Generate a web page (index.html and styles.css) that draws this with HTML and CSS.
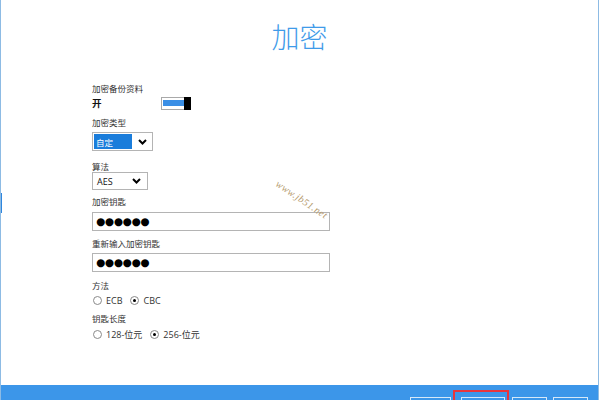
FILE: index.html
```html
<!DOCTYPE html>
<html lang="zh">
<head>
<meta charset="utf-8">
<title>加密</title>
<link rel="stylesheet" href="styles.css">
</head>
<body>
<div class="window">
  <div class="edge-mark"></div>
  <main class="main">
    <h1 class="title">加密</h1>
    <div class="form">
      <div class="label">加密备份资料</div>
      <div class="toggle-row">
        <span class="toggle-text">开</span>
        <span class="toggle"><span class="toggle-fill"></span><span class="toggle-thumb"></span></span>
      </div>
      <div class="label gap-6">加密类型</div>
      <div class="select select-type gap-4">
        <span class="select-value selected">自定</span>
        <svg class="chev" width="9" height="6" viewBox="0 0 9 6"><polyline points="1,1 4.5,4.5 8,1" fill="none" stroke="#000" stroke-width="2"/></svg>
      </div>
      <div class="label gap-9">算法</div>
      <div class="select select-alg">
        <span class="select-value">AES</span>
        <svg class="chev" width="9" height="6" viewBox="0 0 9 6"><polyline points="1,1 4.5,4.5 8,1" fill="none" stroke="#000" stroke-width="2"/></svg>
      </div>
      <div class="label gap-5">加密钥匙</div>
      <div class="input gap-5"><span class="dots">●●●●●●</span></div>
      <div class="label gap-6">重新输入加密钥匙</div>
      <div class="input gap-4"><span class="dots">●●●●●●</span></div>
      <div class="label gap-7">方法</div>
      <div class="radios gap-3">
        <span class="radio"><span class="circle"></span>ECB</span>
        <span class="radio"><span class="circle checked"></span>CBC</span>
      </div>
      <div class="label gap-6">钥匙长度</div>
      <div class="radios gap-4">
        <span class="radio"><span class="circle"></span>128-位元</span>
        <span class="radio"><span class="circle checked"></span>256-位元</span>
      </div>
    </div>
    <div class="watermark">www.jb51.net</div>
  </main>
  <footer class="footer">
    <span class="btn b1"></span>
    <span class="btn b2"></span>
    <span class="btn b3"></span>
    <span class="btn b4"></span>
  </footer>
</div>
</body>
</html>
```
FILE: styles.css
```css
html, body {
  margin: 0;
  padding: 0;
  background: #fff;
}
body {
  width: 600px;
  height: 400px;
  overflow: hidden;
  font-family: "Noto Sans CJK SC", "Noto Sans", sans-serif;
}
.window {
  position: relative;
  width: 597px;
  height: 400px;
  border-left: 1px solid #8dbbe4;
  border-right: 1px solid #8dbbe4;
  display: flex;
  flex-direction: column;
  box-sizing: content-box;
  overflow: hidden;
}
.edge-mark {
  position: absolute;
  left: 0;
  top: 193px;
  width: 1px;
  height: 20px;
  background: #2f86de;
}
.main {
  position: relative;
  flex: 1;
}
.title {
  margin: 0;
  padding-top: 21px;
  font-size: 28px;
  line-height: 30px;
  font-weight: 300;
  color: #3f9be9;
  text-align: center;
  letter-spacing: 0;
}
.form {
  margin-left: 91px;
  margin-top: 31px;
  display: flex;
  flex-direction: column;
  align-items: flex-start;
}
.label {
  font-size: 8.5px;
  line-height: 12px;
  height: 12px;
  color: #333;
}
.gap-3 { margin-top: 3px; }
.gap-4 { margin-top: 4px; }
.gap-5 { margin-top: 5px; }
.gap-6 { margin-top: 6px; }
.gap-7 { margin-top: 7px; }
.gap-9 { margin-top: 9px; }
.toggle-row {
  margin-top: 2px;
  height: 14px;
  display: flex;
  align-items: center;
}
.toggle-text {
  font-size: 9.5px;
  font-weight: 700;
  color: #111;
  width: 69px;
}
.toggle {
  width: 30px;
  height: 13px;
  box-sizing: border-box;
  border: 1px solid #a9a9a9;
  display: flex;
  align-items: center;
  padding-left: 1px;
}
.toggle-fill {
  width: 21px;
  height: 6px;
  background: #3a8fe6;
}
.toggle-thumb {
  margin-left: auto;
  width: 7px;
  height: 13px;
  background: #000;
  margin-right: -1px;
}
.select {
  box-sizing: border-box;
  border: 1px solid #b4b4b4;
  display: flex;
  align-items: center;
  background: #fff;
}
.select-type {
  width: 61px;
  height: 19px;
  padding: 1px;
}
.select-alg {
  width: 56px;
  height: 18px;
  padding: 1px;
}
.select-value {
  font-family: "Open Sans", "Noto Sans CJK SC", sans-serif;
  font-size: 9px;
  color: #111;
  padding-left: 3px;
  flex: 1;
}
.select-value.selected {
  background: #1a7ddb;
  color: #fff;
  align-self: stretch;
  display: flex;
  align-items: center;
  flex: 0 0 38px;
  font-family: "Noto Sans CJK SC", sans-serif;
  font-size: 8.5px;
  padding-left: 2px;
  box-sizing: border-box;
}
.chev {
  margin-left: auto;
  margin-right: 5px;
}
.select-type .chev { margin-right: 4px; }
.input {
  box-sizing: border-box;
  width: 238px;
  height: 19px;
  border: 1px solid #b4b4b4;
  display: flex;
  align-items: center;
  padding-left: 3px;
}
.dots {
  font-family: "DejaVu Sans", sans-serif;
  font-size: 10.5px;
  letter-spacing: -0.3px;
  color: #000;
  line-height: 1;
}
.radios {
  height: 12px;
  display: flex;
  align-items: center;
  gap: 8px;
  padding-left: 1px;
}
.radio {
  display: flex;
  align-items: center;
  gap: 4px;
  font-family: "Open Sans", "Noto Sans CJK SC", sans-serif;
  font-size: 9px;
  color: #333;
}
.circle {
  width: 9px;
  height: 9px;
  box-sizing: border-box;
  border: 1px solid #8a8a8a;
  border-radius: 50%;
  position: relative;
}
.circle.checked::after {
  content: "";
  position: absolute;
  left: 2px;
  top: 2px;
  width: 3px;
  height: 3px;
  border-radius: 50%;
  background: #000;
}
.watermark {
  position: absolute;
  left: 279px;
  top: 178px;
  font-family: "Liberation Serif", serif;
  font-style: italic;
  font-size: 10px;
  color: #b59a6e;
  transform: rotate(34deg);
  transform-origin: left top;
  letter-spacing: 0.5px;
  white-space: nowrap;
}
.footer {
  height: 15px;
  flex: 0 0 15px;
  background: #3c96e9;
  display: flex;
  justify-content: flex-end;
  align-items: flex-start;
  padding-right: 10px;
  position: relative;
  overflow: hidden;
}
.btn {
  display: block;
  margin-top: 12px;
  height: 20px;
  box-sizing: border-box;
  border: 1px solid #d6e8f8;
}
.b1 { width: 41px; }
.b2 { width: 44px; margin-left: 10px; position: relative; }
.b3 { width: 35px; margin-left: 7px; }
.b4 { width: 35px; margin-left: 6px; }
.b2::after {
  content: "";
  position: absolute;
  left: -9px;
  right: -5px;
  top: -8px;
  height: 30px;
  border: 2px solid #e8353c;
}
```
